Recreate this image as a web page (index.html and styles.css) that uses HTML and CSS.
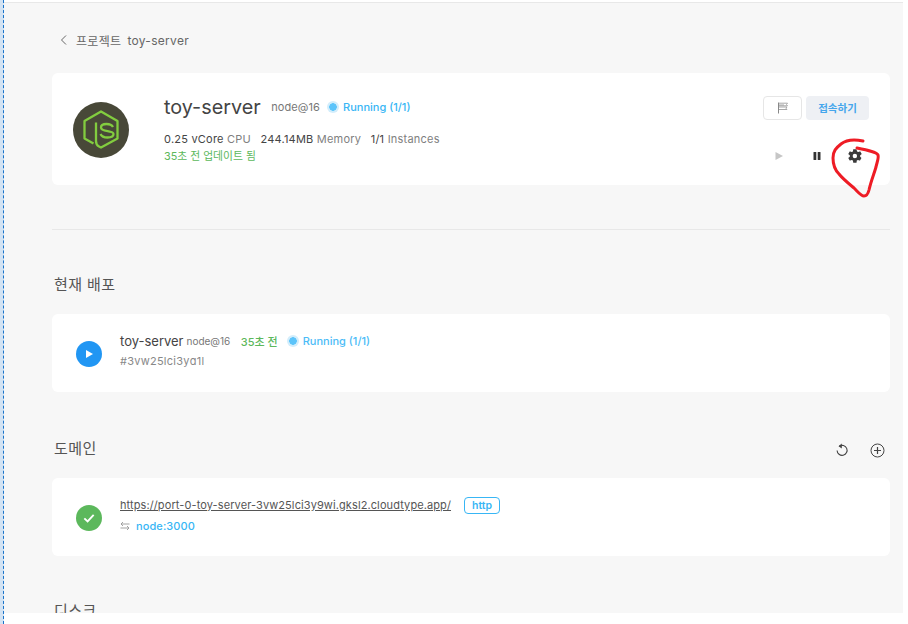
FILE: index.html
```html
<!DOCTYPE html>
<html lang="ko">
<head>
<meta charset="utf-8">
<title>toy-server</title>
<link rel="stylesheet" href="styles.css">
</head>
<body>
<div class="screen">
  <div class="edge"></div>
  <div class="viewport">
    <main class="page">
      <nav class="crumb">
        <svg class="chev" width="8" height="12" viewBox="0 0 8 12"><path d="M6 1.500 1.500 6 6 10.500" fill="none" stroke="#666" stroke-width="1"/></svg>
        <span>프로젝트</span><span>toy-server</span>
      </nav>

      <section class="card hero">
        <div class="logo">
          <svg width="38" height="40" viewBox="0 0 38 40">
            <path d="M14 12.500V31c0 3 1 4.500 3 5.500l2 1 16.500-9V11L19 1.500 2.500 11v17.500l9 5" fill="none" stroke="#82cc3f" stroke-width="2.300" stroke-linejoin="round"/>
            <path d="M31 17c-1-1.800-3-3-6.500-3-3.200 0-5.500 1.300-5.500 3.500 0 5 12.500 2.200 12.500 6.500 0 2.300-2.500 3.500-6 3.500-3.500 0-6-1.200-7-3.500" fill="none" stroke="#82cc3f" stroke-width="2.300"/>
          </svg>
        </div>
        <div class="hero-info">
          <div class="hero-title">
            <h1>toy-server</h1>
            <span class="version">node@16</span>
            <span class="status"><i class="pulse"></i>Running (1/1)</span>
          </div>
          <div class="stats">
            <span>0.25 vCore <em>CPU</em></span>
            <span>244.14MB <em>Memory</em></span>
            <span>1/1 <em>Instances</em></span>
          </div>
          <div class="updated">35초 전 업데이트 됨</div>
        </div>
        <div class="hero-actions">
          <div class="btn-row">
            <button class="btn btn-outline" aria-label="log">
              <svg width="12" height="12" viewBox="0 0 12 12"><path d="M1.500 .5v11" stroke="#888" stroke-width="1"/><path d="M2 1.200h8.500l-1 1.300 1 1.300H2M2 5h8l-1 1.200 1 1.300H2M2 3h5" fill="none" stroke="#a8a8a8" stroke-width="1"/></svg>
            </button>
            <button class="btn btn-soft">접속하기</button>
          </div>
          <div class="ctl-row">
            <svg width="10" height="10" viewBox="0 0 10 10"><path d="M1.500 1 9 5l-7.500 4z" fill="#c6c6c6"/></svg>
            <svg width="10" height="10" viewBox="0 0 10 10"><rect x="1.500" y="1" width="2.800" height="8" rx=".5" fill="#333"/><rect x="5.700" y="1" width="2.800" height="8" rx=".5" fill="#333"/></svg>
            <svg class="gear" width="16" height="16" viewBox="-.3 0 24 24"><path fill="#3a3a3a" fill-rule="evenodd" d="M19.400 13c.1-.3.100-.7.100-1s0-.7-.1-1l2.100-1.600c.2-.2.200-.4.100-.6l-2-3.500c-.1-.2-.4-.3-.6-.2l-2.500 1c-.5-.4-1.100-.7-1.700-1L14 2.400c0-.2-.2-.4-.5-.4h-4c-.3 0-.5.200-.5.400l-.4 2.700c-.6.300-1.200.6-1.700 1l-2.500-1c-.2-.1-.5 0-.6.200l-2 3.500c-.1.200-.1.400.1.600L4 11c-.1.300-.1.700-.1 1s0 .7.1 1l-2.100 1.600c-.2.200-.2.400-.1.600l2 3.500c.1.200.4.300.6.200l2.500-1c.5.400 1.100.7 1.700 1l.4 2.700c0 .2.200.4.500.4h4c.3 0 .5-.2.500-.4l.4-2.700c.6-.3 1.200-.6 1.700-1l2.500 1c.2.100.5 0 .6-.2l2-3.500c.1-.2.100-.4-.1-.6zM11.500 15.300a3.300 3.300 0 1 1 0-6.600 3.300 3.300 0 0 1 0 6.600z"/></svg>
          </div>
        </div>
      </section>

      <hr class="rule">

      <h2 class="heading">현재 배포</h2>
      <section class="card row">
        <span class="badge badge-blue">
          <svg width="10" height="10" viewBox="0 0 10 10"><path d="M2 1 9 5 2 9z" fill="#fff"/></svg>
        </span>
        <div class="row-body">
          <div class="row-line">
            <span class="deploy-name">toy-server</span>
            <span class="deploy-ver">node@16</span>
            <span class="deploy-time">35초 전</span>
            <span class="status status-sm"><i class="pulse"></i>Running (1/1)</span>
          </div>
          <div class="hash">#3vw25lci3yɑ1l</div>
        </div>
      </section>

      <div class="heading-row">
        <h2 class="heading">도메인</h2>
        <div class="heading-tools">
          <svg width="14" height="14" viewBox="0 0 14 14"><path d="M4.300 3.200a5 5 0 1 1-2.200 4.300" fill="none" stroke="#444" stroke-width="1.100"/><path d="M6.800.6 3.500 3.200l3.300 2.300z" fill="#444"/></svg>
          <svg width="15" height="15" viewBox="0 0 15 15"><circle cx="7.500" cy="7.500" r="6.500" fill="none" stroke="#444" stroke-width="1"/><path d="M7.500 4v7M4 7.500h7" stroke="#444" stroke-width="1.200"/></svg>
        </div>
      </div>
      <section class="card row">
        <span class="badge badge-green">
          <svg width="14" height="14" viewBox="0 0 12 12"><path d="M2 6.300 4.800 9 10 3.300" fill="none" stroke="#fff" stroke-width="1.600"/></svg>
        </span>
        <div class="row-body">
          <div class="row-line url-line">
            <a class="url" href="#">https://port-0-toy-server-3vw25lci3y9wi.gksl2.cloudtype.app/</a>
            <span class="tag">http</span>
          </div>
          <div class="row-line port-line">
            <svg width="10" height="10" viewBox="0 0 10 10"><path d="M9.500 3H1M3 1 1 3l2 2M.5 7H9M7 5l2 2-2 2" fill="none" stroke="#999" stroke-width=".9"/></svg>
            <span class="port">node:3000</span>
          </div>
        </div>
      </section>

      <h2 class="heading heading-disk">디스크</h2>
    </main>
  </div>
  <svg class="scribble" width="54" height="68" viewBox="0 0 54 68">
    <path d="M33 7C24 5 16 6 11 10 6 14 3 17 3 24 3 31 5 36 9 40 13 45 18 49 24 54 28 58 31 62 34 62c3 0 4-2 5-6 2-9 5-16 7-23 1-5 3-9 2-12-1-3-11-5-21-7" fill="none" stroke="#ee1c25" stroke-width="3" stroke-linecap="round" stroke-linejoin="round"/>
  </svg>
</div>
</body>
</html>
```
FILE: styles.css
```css
* { box-sizing: border-box; }
html, body { margin: 0; padding: 0; background: #fff; }
body {
  font-family: Inter, "Noto Sans CJK KR", "Noto Sans", sans-serif;
  color: #444;
}
.screen {
  position: relative;
  display: flex;
  width: 908px;
  height: 624px;
  overflow: hidden;
  background: #fff;
}
.edge {
  flex: none;
  width: 4px;
  background: #d3e3f3;
  border-right: 1px dashed #1a73c9;
}
.viewport {
  flex: none;
  width: 899px;
  height: 613px;
  padding-top: 2px;
  overflow: hidden;
  background: #fff;
}
.page {
  height: 611px;
  padding: 26px 13px 0 48px;
  overflow: hidden;
  background: #f7f7f7;
  border-top: 1px solid #e8e8e8;
}
.crumb {
  display: flex;
  align-items: center;
  height: 22px;
  margin-bottom: 22px;
  font-size: 12px;
  letter-spacing: .3px;
  color: #666;
}
.chev { margin: 0 8px; }
.crumb span + span { margin-left: 6px; }
.card {
  background: #fff;
  border-radius: 6px;
}
.hero {
  display: flex;
  align-items: flex-start;
  height: 112px;
  padding: 22px 21px 0 21px;
}
.logo {
  display: flex;
  flex: none;
  align-items: center;
  justify-content: center;
  width: 56px;
  height: 56px;
  margin: 7px 35px 0 0;
  border-radius: 50%;
  background: #484838;
}
.hero-info { flex: 1; }
.hero-title {
  display: flex;
  align-items: center;
  height: 24px;
}
h1 {
  margin: 0 10.500px 0 0;
  font-size: 19.800px;
  font-weight: 400;
  color: #444;
}
.version { margin-right: 7px; font-size: 11px; letter-spacing: .1px; color: #777; }
.status {
  display: inline-flex;
  align-items: center;
  font-size: 11px;
  font-weight: 500;
  color: #38b6f5;
}
.pulse {
  display: inline-block;
  width: 12px;
  height: 12px;
  margin-right: 4px;
  border-radius: 50%;
  background: radial-gradient(circle, #5cc4fa 0 3.500px, #d2edfb 4px);
}
.stats {
  display: flex;
  gap: 9.500px;
  margin-top: 12px;
  font-size: 11px;
  line-height: 16px;
  letter-spacing: .22px;
  color: #444;
}
.stats em { font-style: normal; color: #808080; }
.updated { margin-top: 2px; font-size: 10.800px; line-height: 16px; color: #5cb85c; }
.hero-actions {
  display: flex;
  flex-direction: column;
  align-items: flex-end;
}
.btn-row { display: flex; gap: 4px; margin-top: 1px; }
.btn {
  height: 24px;
  border-radius: 4px;
  font-family: inherit;
  font-size: 10.500px;
  font-weight: 600;
}
.btn-outline {
  display: flex;
  align-items: center;
  justify-content: center;
  width: 39px;
  padding: 0;
  background: #fff;
  border: 1px solid #e6e6e6;
}
.btn-soft {
  width: 63px;
  padding: 0 0 1px;
  background: #eef0f4;
  border: 0;
  color: #45a6ec;
}
.ctl-row {
  display: flex;
  align-items: center;
  gap: 28px;
  margin: 28px 0 0 0;
  padding-right: 6px;
}
.gear { margin-left: -3px; }
.rule {
  height: 1px;
  margin: 44px 0 0;
  background: #e8e8e8;
  border: 0;
}
.heading {
  margin: 0;
  font-size: 15px;
  font-weight: 400;
  line-height: 22px;
  letter-spacing: .4px;
  color: #555;
}
.rule + .heading { margin: 44px 0 18px 2px; }
.row {
  display: flex;
  align-items: flex-start;
  height: 78px;
  padding: 16px 0 0 24px;
}
.badge {
  display: flex;
  flex: none;
  align-items: center;
  justify-content: center;
  width: 26px;
  height: 26px;
  margin: 11px 18px 0 0;
  border-radius: 50%;
}
.badge-blue { background: #2196f3; }
.badge-green { background: #5cb85c; }
.row-body { flex: 1; }
.row-line { display: flex; align-items: center; }
.deploy-name { font-size: 13px; line-height: 22px; color: #444; }
.deploy-ver { margin: 0 10.500px 0 3px; font-size: 10px; color: #777; }
.deploy-time { margin-right: 9px; font-size: 11px; font-weight: 500; color: #5cb85c; }
.status-sm { font-size: 11px; color: #4cbcf7; }
.hash { margin-top: 1px; font-size: 11px; line-height: 16px; letter-spacing: .25px; color: #888; }
.heading-row {
  display: flex;
  align-items: center;
  justify-content: space-between;
  height: 30px;
  margin: 42px 0 14px 2px;
}
.heading-tools {
  display: flex;
  align-items: center;
  gap: 21px;
  padding: 2px 5px 0 0;
}
.url-line { height: 22px; }
.url { font-size: 11px; letter-spacing: .1px; color: #555; text-decoration: underline; }
.tag {
  width: 36px;
  margin-left: 13px;
  border: 1px solid #38b6f5;
  border-radius: 4px;
  font-size: 10.500px;
  font-weight: 600;
  line-height: 15px;
  text-align: center;
  color: #38b6f5;
}
.port-line { gap: 6px; height: 20px; }
.port { font-size: 11px; font-weight: 500; letter-spacing: .1px; color: #38b6f5; }
.heading-disk { margin: 44px 0 0 2px; }
.scribble {
  position: absolute;
  top: 134px;
  left: 830px;
}
```
